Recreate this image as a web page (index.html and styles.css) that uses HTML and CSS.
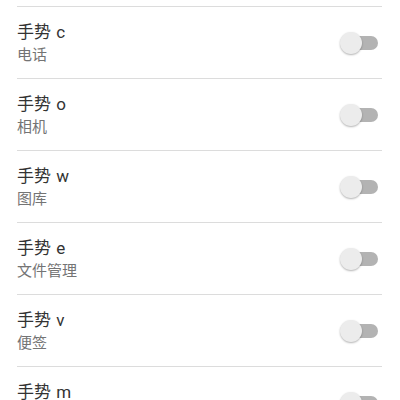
FILE: index.html
```html
<!DOCTYPE html>
<html lang="zh-CN">

<head>
    <meta charset="UTF-8">
    <meta name="viewport" content="width=device-width, initial-scale=1.0">
    <title>手势设置</title>
    <link rel="stylesheet" href="styles.css">
</head>

<body>
    <div class="gesture_list">
        <div class="gesture_row">
            <div class="gesture_text">
                <div class="gesture_title">手势 c</div>
                <div class="gesture_app">电话</div>
            </div>
            <div class="switch"><span class="track"></span><span class="thumb"></span></div>
        </div>
        <div class="gesture_row">
            <div class="gesture_text">
                <div class="gesture_title">手势 o</div>
                <div class="gesture_app">相机</div>
            </div>
            <div class="switch"><span class="track"></span><span class="thumb"></span></div>
        </div>
        <div class="gesture_row">
            <div class="gesture_text">
                <div class="gesture_title">手势 w</div>
                <div class="gesture_app">图库</div>
            </div>
            <div class="switch"><span class="track"></span><span class="thumb"></span></div>
        </div>
        <div class="gesture_row">
            <div class="gesture_text">
                <div class="gesture_title">手势 e</div>
                <div class="gesture_app">文件管理</div>
            </div>
            <div class="switch"><span class="track"></span><span class="thumb"></span></div>
        </div>
        <div class="gesture_row">
            <div class="gesture_text">
                <div class="gesture_title">手势 v</div>
                <div class="gesture_app">便签</div>
            </div>
            <div class="switch"><span class="track"></span><span class="thumb"></span></div>
        </div>
        <div class="gesture_row">
            <div class="gesture_text">
                <div class="gesture_title">手势 m</div>
                <div class="gesture_app">音乐</div>
            </div>
            <div class="switch"><span class="track"></span><span class="thumb"></span></div>
        </div>
    </div>
</body>

</html>
```

FILE: styles.css
```css
body {
    margin: 0;
    background-color: #ffffff;
    font-family: Roboto, "Noto Sans CJK SC", sans-serif;
    overflow: hidden;
}

.gesture_list {
    padding: 6px 18px 0 17px;
}

.gesture_row {
    display: flex;
    align-items: center;
    justify-content: space-between;
    height: 71px;
    border-top: 1px solid #dcdcdc;
}

.gesture_text {
    padding-top: 1px;
}

.gesture_title {
    font-size: 17px;
    line-height: 23px;
    color: #333333;
    word-spacing: 1px;
}

.gesture_app {
    font-size: 15px;
    line-height: 22px;
    color: #747474;
}

.switch {
    position: relative;
    width: 38px;
    height: 22px;
    margin-right: 4px;
}

.track {
    position: absolute;
    left: 4px;
    right: 0;
    top: 4px;
    height: 14px;
    border-radius: 7px;
    background-color: #b3b3b3;
}

.thumb {
    position: absolute;
    left: 0;
    top: 0;
    width: 22px;
    height: 22px;
    border-radius: 50%;
    background-color: #ececec;
    box-shadow: 0 1px 2px rgba(0, 0, 0, 0.3);
}
```
